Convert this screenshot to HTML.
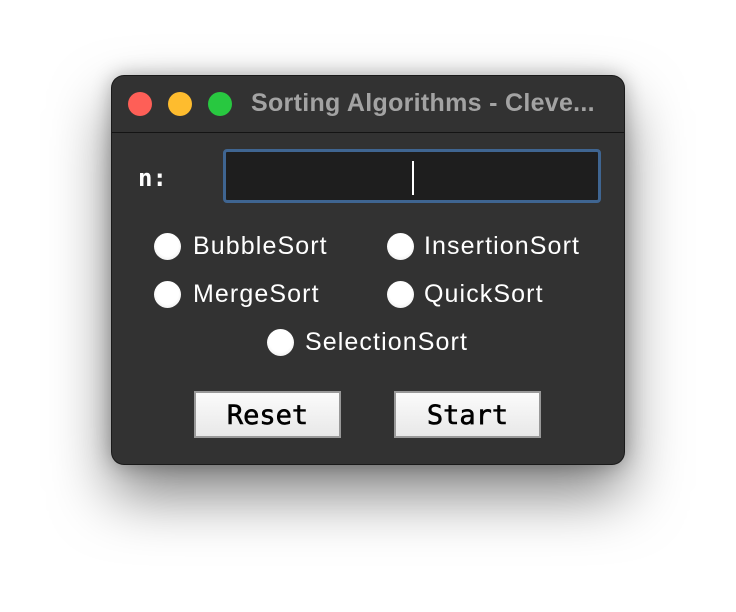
<!DOCTYPE html>
<html><head><style>
body{margin:0;width:736px;height:612px;background:#fff;position:relative;overflow:hidden;font-family:"Liberation Sans",sans-serif}
.win{position:absolute;left:112px;top:76px;width:512px;height:388px;background:#323232;border-radius:12px;box-shadow:0 0 0 1px #1a1a1a,0 30px 60px rgba(0,0,0,.5),0 0 20px rgba(0,0,0,.3);overflow:hidden}
.tl{position:absolute;top:16px;width:24px;height:24px;border-radius:50%}
.title{position:absolute;left:139px;top:13px;color:#a3a3a3;font-weight:bold;font-size:25px;letter-spacing:0.3px;white-space:nowrap}
.sep{position:absolute;left:0;top:56px;width:512px;height:1px;background:#141414}
.n{position:absolute;left:26px;top:88px;color:#fff;font-family:"DejaVu Sans Mono",monospace;font-weight:bold;font-size:24px}
.inp{position:absolute;left:111px;top:73px;width:372px;height:48px;border:3px solid #3f6591;border-radius:4px;background:#1e1e1e}
.cur{position:absolute;left:186px;top:9px;width:2px;height:34px;background:#fff}
.r{position:absolute;width:27px;height:27px;border-radius:50%;background:radial-gradient(circle at 50% 45%,#fff 55%,#ddd 100%)}
.l{position:absolute;color:#fff;font-size:25px;letter-spacing:1.1px;white-space:nowrap}
.b{position:absolute;top:315px;width:143px;height:43px;border:2px solid #999;background:linear-gradient(#fbfbfb,#e8e8e8);font-family:"DejaVu Sans Mono",monospace;font-size:27px;text-align:center;line-height:45px;color:#000;-webkit-text-stroke:0.6px #000}
</style></head><body>
<div class="win">
<div class="tl" style="left:16px;background:#fe5f57"></div>
<div class="tl" style="left:56px;background:#febc2e"></div>
<div class="tl" style="left:96px;background:#28c840"></div>
<div class="title">Sorting Algorithms - Cleve...</div>
<div class="sep"></div>
<div class="n">n:</div>
<div class="inp"><div class="cur"></div></div>
<div class="r" style="left:42px;top:157px"></div><div class="l" style="left:81px;top:156px">BubbleSort</div>
<div class="r" style="left:275px;top:157px"></div><div class="l" style="left:312px;top:156px">InsertionSort</div>
<div class="r" style="left:42px;top:205px"></div><div class="l" style="left:81px;top:204px">MergeSort</div>
<div class="r" style="left:275px;top:205px"></div><div class="l" style="left:312px;top:204px">QuickSort</div>
<div class="r" style="left:155px;top:253px"></div><div class="l" style="left:193px;top:252px">SelectionSort</div>
<div class="b" style="left:82px">Reset</div>
<div class="b" style="left:282px">Start</div>
</div>
</body></html>
